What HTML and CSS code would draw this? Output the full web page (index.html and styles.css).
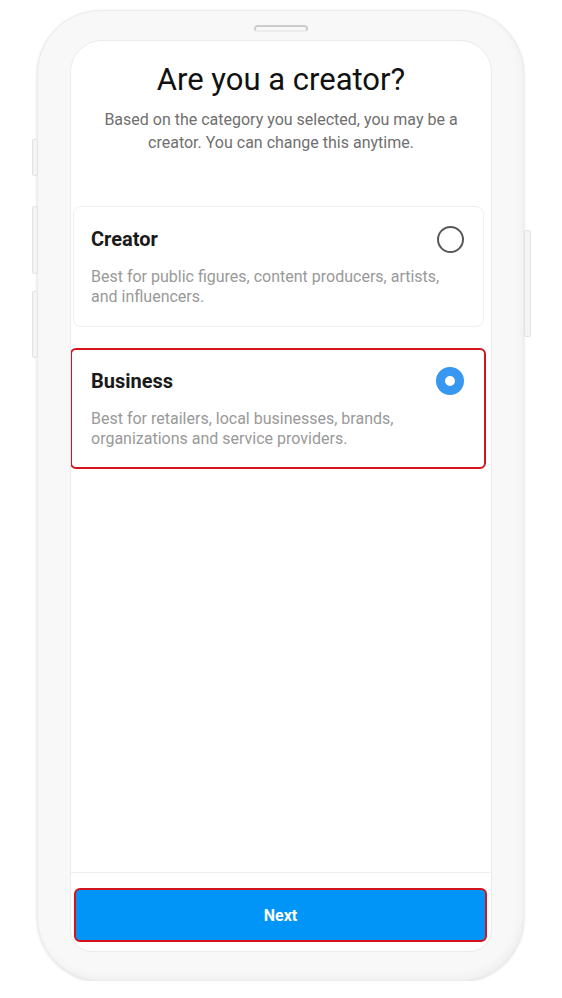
FILE: index.html
```html
<!DOCTYPE html>
<html lang="en">
  <head>
    <meta charset="UTF-8" />
    <meta name="viewport" content="width=device-width, initial-scale=1.0" />
    <title>Are you a creator?</title>
    <link rel="stylesheet" href="styles.css">
  </head>
  <body>
    <div class="stage">
      <div class="phone">
        <span class="speaker"></span>
        <span class="key key-mute"></span>
        <span class="key key-up"></span>
        <span class="key key-down"></span>
        <span class="key key-power"></span>

        <div class="screen">
          <div class="intro">
            <h1>Are you a creator?</h1>
            <p>Based on the category you selected, you may be a creator. You can change this anytime.</p>
          </div>

          <div class="options">
            <div class="option">
              <div class="option-head">
                <span class="option-title">Creator</span>
                <span class="radio"></span>
              </div>
              <p class="option-desc">Best for public figures, content producers, artists, and influencers.</p>
            </div>

            <div class="option is-marked">
              <div class="option-head">
                <span class="option-title">Business</span>
                <span class="radio is-checked"></span>
              </div>
              <p class="option-desc">Best for retailers, local businesses, brands, organizations and service providers.</p>
            </div>
          </div>

          <div class="footer">
            <button class="next">Next</button>
          </div>
        </div>
      </div>
    </div>
  </body>
</html>
```

FILE: styles.css
```css
/* Reset básico */
* {
  box-sizing: border-box;
  margin: 0;
  padding: 0;
}

body {
  font-family: Roboto, "Liberation Sans", Arial, sans-serif;
  background-color: #fff;
}

.stage {
  padding: 10px 0 0 37px;
}

/* marco del teléfono */
.phone {
  position: relative;
  width: 487px;
  height: 971px;
  padding: 30px 32px 29px 33px;
  background: #f8f8f8;
  border-radius: 64px;
  box-shadow: 0 1px 3px rgba(0, 0, 0, 0.14), inset 0 0 0 1px #ececec,
    inset -3px -4px 8px rgba(0, 0, 0, 0.04);
}

.speaker {
  position: absolute;
  top: 15px;
  left: 217px;
  width: 54px;
  height: 7px;
  border: 2px solid #cdcdcd;
  border-bottom-color: #ececec;
  border-radius: 4px;
}

.key {
  position: absolute;
  width: 6px;
  background: #f4f4f4;
  border: 1px solid #e3e3e3;
  border-radius: 2px;
}

.key-mute { left: -5px; top: 129px; height: 37px; }
.key-up { left: -5px; top: 196px; height: 68px; }
.key-down { left: -5px; top: 281px; height: 67px; }
.key-power { right: -7px; top: 220px; height: 107px; width: 7px; }

/* pantalla */
.screen {
  height: 912px;
  background: #fff;
  border: 1px solid #ebebeb;
  border-radius: 32px 32px 22px 22px;
  display: flex;
  flex-direction: column;
  overflow: hidden;
}

.intro {
  padding: 21px 20px 0;
  text-align: center;
}

.intro h1 {
  font-size: 31px;
  font-weight: 400;
  line-height: 36px;
  color: #111;
}

.intro p {
  margin-top: 10px;
  font-size: 16px;
  line-height: 23px;
  color: #6f6f6f;
}

.options {
  margin-top: 52px;
  padding: 0 7px 0 2px;
  display: flex;
  flex-direction: column;
  gap: 21px;
}

.option {
  border: 1px solid #efefef;
  border-radius: 8px;
  padding: 18px 18px 19px 17px;
}

.option.is-marked {
  border: 2px solid #d3141e;
  border-radius: 6px;
  margin: 0 -2px 0 -3px;
  padding: 17px 19px 18px 19px;
}

.option-head {
  height: 28px;
  display: flex;
  align-items: center;
  justify-content: space-between;
}

.option-title {
  font-size: 20px;
  font-weight: 700;
  color: #1a1a1a;
}

.radio {
  width: 27px;
  height: 27px;
  margin-right: 1px;
  border: 2px solid #575757;
  border-radius: 50%;
}

.radio.is-checked {
  width: 28px;
  height: 28px;
  border: 9px solid #3897f0;
  background: #fff;
}

.option-desc {
  margin-top: 14px;
  font-size: 16px;
  line-height: 20px;
  color: #999;
}

.footer {
  margin-top: auto;
  border-top: 1px solid #efefef;
  padding: 15px 4px 9px 3px;
}

.next {
  display: block;
  width: 100%;
  height: 54px;
  background: #0095f6;
  border: 2px solid #d3141e;
  border-radius: 6px;
  font-family: Roboto, "Liberation Sans", Arial, sans-serif;
  font-size: 16px;
  font-weight: 700;
  color: #fff;
  cursor: pointer;
}
```
